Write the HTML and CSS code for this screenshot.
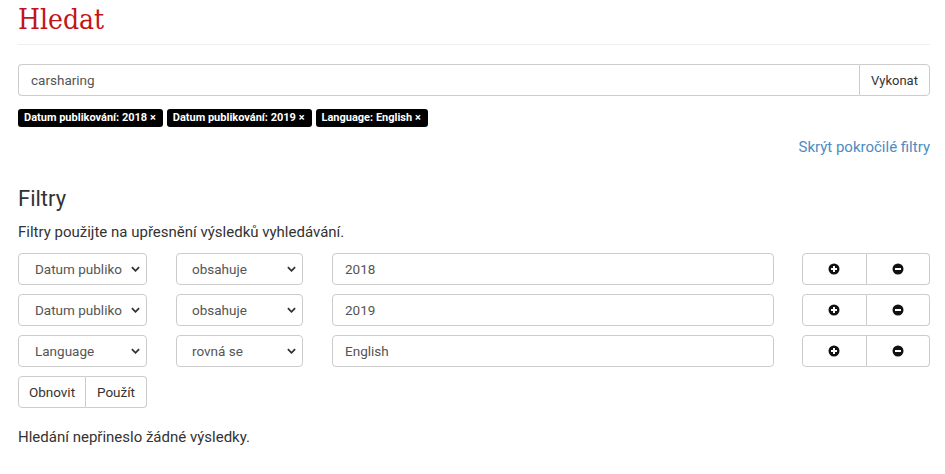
FILE: index.html
```html
<!DOCTYPE html>
<html lang="cs">
<head>
<meta charset="utf-8">
<title>Hledat</title>
<link rel="stylesheet" href="styles.css">
</head>
<body>
<div class="page">
  <h1 class="title">Hledat</h1>

  <div class="search">
    <div class="search-input">carsharing</div>
    <button class="btn search-btn">Vykonat</button>
  </div>

  <div class="tags">
    <span class="tag">Datum publikování: 2018 ×</span>
    <span class="tag">Datum publikování: 2019 ×</span>
    <span class="tag">Language: English ×</span>
  </div>

  <div class="adv"><a class="adv-link" href="#">Skrýt pokročilé filtry</a></div>

  <h2 class="filters-title">Filtry</h2>
  <p class="desc">Filtry použijte na upřesnění výsledků vyhledávání.</p>

  <div class="rows">
    <div class="row">
      <div class="select sel1"><span>Datum publiko</span><svg class="chev" viewBox="0 0 10 6" width="9" height="6"><path d="M1 1 L5 5 L9 1" fill="none" stroke="#333" stroke-width="2"/></svg></div>
      <div class="select sel2"><span>obsahuje</span><svg class="chev" viewBox="0 0 10 6" width="9" height="6"><path d="M1 1 L5 5 L9 1" fill="none" stroke="#333" stroke-width="2"/></svg></div>
      <div class="field">2018</div>
      <div class="btn-group">
        <button class="btn icon-btn"><svg viewBox="0 0 12 12" width="12" height="12"><circle cx="6" cy="6" r="5.5" fill="#111"/><path d="M6 3 V9 M3 6 H9" stroke="#fff" stroke-width="2"/></svg></button>
        <button class="btn icon-btn"><svg viewBox="0 0 12 12" width="12" height="12"><circle cx="6" cy="6" r="5.5" fill="#111"/><path d="M3 6 H9" stroke="#fff" stroke-width="2"/></svg></button>
      </div>
    </div>
    <div class="row">
      <div class="select sel1"><span>Datum publiko</span><svg class="chev" viewBox="0 0 10 6" width="9" height="6"><path d="M1 1 L5 5 L9 1" fill="none" stroke="#333" stroke-width="2"/></svg></div>
      <div class="select sel2"><span>obsahuje</span><svg class="chev" viewBox="0 0 10 6" width="9" height="6"><path d="M1 1 L5 5 L9 1" fill="none" stroke="#333" stroke-width="2"/></svg></div>
      <div class="field">2019</div>
      <div class="btn-group">
        <button class="btn icon-btn"><svg viewBox="0 0 12 12" width="12" height="12"><circle cx="6" cy="6" r="5.5" fill="#111"/><path d="M6 3 V9 M3 6 H9" stroke="#fff" stroke-width="2"/></svg></button>
        <button class="btn icon-btn"><svg viewBox="0 0 12 12" width="12" height="12"><circle cx="6" cy="6" r="5.5" fill="#111"/><path d="M3 6 H9" stroke="#fff" stroke-width="2"/></svg></button>
      </div>
    </div>
    <div class="row">
      <div class="select sel1"><span>Language</span><svg class="chev" viewBox="0 0 10 6" width="9" height="6"><path d="M1 1 L5 5 L9 1" fill="none" stroke="#333" stroke-width="2"/></svg></div>
      <div class="select sel2"><span>rovná se</span><svg class="chev" viewBox="0 0 10 6" width="9" height="6"><path d="M1 1 L5 5 L9 1" fill="none" stroke="#333" stroke-width="2"/></svg></div>
      <div class="field">English</div>
      <div class="btn-group">
        <button class="btn icon-btn"><svg viewBox="0 0 12 12" width="12" height="12"><circle cx="6" cy="6" r="5.5" fill="#111"/><path d="M6 3 V9 M3 6 H9" stroke="#fff" stroke-width="2"/></svg></button>
        <button class="btn icon-btn"><svg viewBox="0 0 12 12" width="12" height="12"><circle cx="6" cy="6" r="5.5" fill="#111"/><path d="M3 6 H9" stroke="#fff" stroke-width="2"/></svg></button>
      </div>
    </div>
  </div>

  <div class="actions">
    <button class="btn act">Obnovit</button>
    <button class="btn act">Použít</button>
  </div>

  <p class="result">Hledání nepřineslo žádné výsledky.</p>
</div>
</body>
</html>
```

FILE: styles.css
```css
* { box-sizing: border-box; }
html, body { margin: 0; padding: 0; background: #fff; }
body {
  font-family: Roboto, "Liberation Sans", Arial, sans-serif;
  font-size: 15px;
  color: #333;
}
.page {
  width: 930px;
  padding-left: 18px;
}
.title {
  margin: 0;
  height: 45px;
  padding-bottom: 4px;
  line-height: 40px;
  font-family: "DejaVu Serif Condensed", "DejaVu Serif", "Liberation Serif", serif;
  font-stretch: condensed;
  font-weight: normal;
  font-size: 28px;
  color: #c3141b;
  border-bottom: 1px solid #eee;
}
.search {
  margin-top: 19px;
  display: flex;
  height: 32px;
}
.search-input {
  flex: 1;
  border: 1px solid #ccc;
  border-right: none;
  border-radius: 4px 0 0 4px;
  padding: 0 12px;
  line-height: 30px;
  color: #555;
  font-size: 13.5px;
}
.btn {
  font-family: Roboto, "Liberation Sans", Arial, sans-serif;
  font-size: 13px;
  color: #333;
  background: #fff;
  border: 1px solid #ccc;
  margin: 0;
  padding: 0;
  cursor: pointer;
}
.search-btn {
  width: 71px;
  border-radius: 0 4px 4px 0;
}
.tags {
  margin-top: 13px;
  display: flex;
  gap: 4px;
  height: 18px;
}
.tag {
  background: #000;
  color: #fff;
  font-weight: bold;
  font-size: 11px;
  line-height: 18px;
  padding: 0 7px 0 6px;
  border-radius: 3px;
}
.adv {
  margin-top: 10px;
  text-align: right;
  line-height: 20px;
}
.adv-link {
  color: #4d8bc3;
  text-decoration: none;
  font-size: 15px;
}
.filters-title {
  margin: 29px 0 0;
  font-size: 22px;
  line-height: 26px;
  font-weight: normal;
  color: #333;
}
.desc {
  margin: 10px 0 0;
  line-height: 20px;
}
.rows {
  margin-top: 11px;
  display: flex;
  flex-direction: column;
  gap: 9px;
}
.row {
  display: grid;
  grid-template-columns: 129px 127px 442px 1fr;
  column-gap: 29px;
  height: 32px;
}
.row > .btn-group { margin-left: -1px; }
.select {
  display: flex;
  align-items: center;
  justify-content: space-between;
  border: 1px solid #ccc;
  border-radius: 4px;
  color: #555;
  font-size: 13.5px;
  padding: 0 6px 0 16px;
}
.sel2 { padding-left: 15px; }
.chev { display: block; }
.field {
  border: 1px solid #ccc;
  border-radius: 4px;
  padding: 0 12px;
  line-height: 30px;
  color: #555;
  font-size: 13.5px;
}
.btn-group {
  display: flex;
}
.icon-btn {
  flex: 1;
  display: flex;
  align-items: center;
  justify-content: center;
}
.icon-btn:first-child { border-radius: 4px 0 0 4px; }
.icon-btn:last-child { border-radius: 0 4px 4px 0; border-left: none; }
.actions {
  margin-top: 9px;
  display: flex;
  height: 32px;
}
.act { padding: 0; font-size: 13.5px; }
.act:first-child { border-radius: 4px 0 0 4px; width: 68px; }
.act:last-child { border-radius: 0 4px 4px 0; border-left: none; width: 61px; }
.result {
  margin: 19px 0 0;
  line-height: 20px;
}
```
